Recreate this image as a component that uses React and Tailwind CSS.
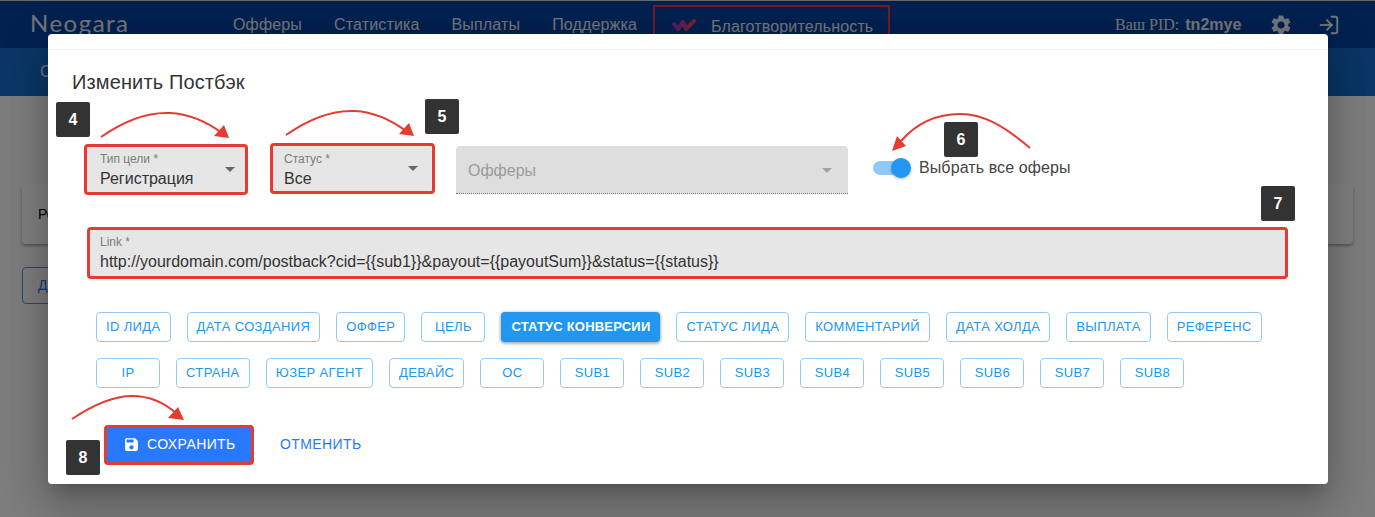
import React from "react";
import { LogIn } from "lucide-react";

const rowOne = [
  "ID лида",
  "Дата создания",
  "Оффер",
  "Цель",
  "Статус конверсии",
  "Статус лида",
  "Комментарий",
  "Дата холда",
  "Выплата",
  "Референс",
];
const rowTwo = ["IP", "Страна", "Юзер агент", "Девайс", "ОС", "SUB1", "SUB2", "SUB3", "SUB4", "SUB5", "SUB6", "SUB7", "SUB8"];

const navItems = ["Офферы", "Статистика", "Выплаты", "Поддержка"];

function Caret({ className }) {
  return <span className={`absolute h-0 w-0 border-x-[5px] border-t-[5px] border-x-transparent ${className}`} />;
}

function Chip({ label }) {
  const active = label === "Статус конверсии";
  return (
    <button
      className={`flex h-[30px] min-w-16 items-center justify-center rounded-[4px] text-[13px] uppercase ${
        active
          ? "bg-[#2196f3] px-[10px] font-bold tracking-[0.2px] text-white shadow-[0_1px_3px_1px_rgba(0,0,0,0.3)]"
          : "border border-[#90caf9] px-[9px] font-normal tracking-[0.37px] text-[#2196f3]"
      }`}
    >
      {label}
    </button>
  );
}

function SelectField({ label, value, className, caret }) {
  return (
    <div className={`relative rounded-[4px] border-[3px] border-[#e53b30] bg-[#e6e6e6] ${className}`}>
      <div className="mt-[5px] text-[12px] leading-[14px] text-[#7d7d7d]">{label}</div>
      <div className="mt-[3px] text-[16px] leading-[20px] text-[#333]">{value}</div>
      <Caret className={`top-[20px] border-t-[#666] ${caret}`} />
    </div>
  );
}

function Badge({ n, className }) {
  return (
    <div className={`absolute flex h-[35px] w-[34px] items-center justify-center rounded-[2px] bg-[#333] text-[16px] font-bold text-white ${className}`}>
      {n}
    </div>
  );
}

function Arrows() {
  return (
    <svg className="absolute left-0 top-0" width="1375" height="517" fill="none">
      <g stroke="#e53b30" strokeWidth="2">
        <path d="M101 137C128 118 150 112 170 113C190 114 207 122 222 133" />
        <path d="M286 135C313 116 335 110 355 111C375 112 391 120 406 131" />
        <path d="M1030 148C1005 127 985 114 960 114C935 114 915 125 901 141" />
        <path d="M72 419C96 403 115 396 132 396C150 396 165 403 177 414" />
      </g>
      <g fill="#e53b30">
        <path d="M229 138L214 136L224 125Z" />
        <path d="M414 136L399 134L409 123Z" />
        <path d="M892 151L897 136L906 146Z" />
        <path d="M184 420L168 418L178 407Z" />
      </g>
    </svg>
  );
}

export default function App() {
  return (
    <div className="relative h-[517px] w-[1375px] overflow-hidden bg-[#fafafa] font-['Liberation_Sans',sans-serif]">
      {/* page under the dialog */}
      <header className="flex h-12 items-center border-t border-[#ccc] bg-[#0642a0] text-[16px] tracking-[0.15px] text-white/90">
        <div className="ml-[30px] w-[203px] pb-[4px] text-[24px] font-normal leading-none tracking-[1.5px] text-white/90 font-['Lato',sans-serif]">Neogara</div>
        <nav className="flex items-center gap-8">
          {navItems.map((item) => (
            <a key={item}>{item}</a>
          ))}
        </nav>
        <div className="ml-4 flex h-[43px] w-[237px] items-start self-end rounded-t-[2px] border-2 border-b-0 border-[#e53950] pl-4 pt-[8px]">
          <svg className="mt-[3px]" width="26" height="14" viewBox="0 0 26 14" fill="none">
            <defs>
              <linearGradient id="charity" x1="0" x2="1" y1="0" y2="0">
                <stop offset="0" stopColor="#a13cc4" />
                <stop offset="1" stopColor="#ea4668" />
              </linearGradient>
            </defs>
            <path d="M3 6L7 11L12 4L15 11L23 3" stroke="url(#charity)" strokeWidth="4" strokeLinecap="round" strokeLinejoin="round" />
          </svg>
          <span className="ml-[14px]">Благотворительность</span>
        </div>
        <div className="ml-[225px] flex items-center whitespace-nowrap tracking-normal">
          <span className="font-['Liberation_Serif',serif]">Ваш PID:</span>
          <b className="ml-[6px]">tn2mye</b>
        </div>
        <svg className="ml-[28px]" width="24" height="24" viewBox="0 0 24 24" fill="currentColor">
          <path d="M19.14 12.94c.04-.3.06-.61.06-.94 0-.32-.02-.64-.07-.94l2.03-1.58c.18-.14.23-.41.12-.61l-1.92-3.32c-.12-.22-.37-.29-.59-.22l-2.39.96c-.5-.38-1.03-.7-1.62-.94l-.36-2.54c-.04-.24-.24-.41-.48-.41h-3.84c-.24 0-.43.17-.47.41l-.36 2.54c-.59.24-1.13.57-1.62.94l-2.39-.96c-.22-.08-.47 0-.59.22L2.74 8.87c-.12.21-.08.47.12.61l2.03 1.58c-.05.3-.09.63-.09.94s.02.64.07.94l-2.03 1.58c-.18.14-.23.41-.12.61l1.92 3.32c.12.22.37.29.59.22l2.39-.96c.5.38 1.03.7 1.62.94l.36 2.54c.05.24.24.41.48.41h3.84c.24 0 .44-.17.47-.41l.36-2.54c.59-.24 1.13-.56 1.62-.94l2.39.96c.22.08.47 0 .59-.22l1.92-3.32c.12-.22.07-.47-.12-.61l-2.01-1.58zM12 15.6c-1.98 0-3.6-1.62-3.6-3.6s1.62-3.6 3.6-3.6 3.6 1.62 3.6 3.6-1.62 3.6-3.6 3.6z" />
        </svg>
        <LogIn className="ml-[25px]" size={22} strokeWidth={2} strokeLinecap="square" strokeLinejoin="miter" />
      </header>
      <div className="flex h-12 items-center bg-gradient-to-r from-[#166ccc] to-[#146ac8] pl-10 text-[16px] text-white/90">С</div>
      <div className="mx-[22px] mt-[88px] flex h-[60px] items-center rounded-[4px] bg-white pl-4 text-[14px] text-black shadow-[0_2px_3px_rgba(0,0,0,0.3)]">Ре</div>
      <button className="ml-[22px] mt-[23px] h-[37px] w-[120px] rounded-[4px] border border-[#5c8fd6] pl-[15px] text-left text-[14px] text-[#2979ff]">Д</button>

      <div className="absolute inset-0 bg-black/50" />

      {/* dialog */}
      <div className="absolute left-12 top-[34px] h-[450px] w-[1280px] rounded-[4px] bg-white shadow-[0_11px_15px_-7px_rgba(0,0,0,0.2),0_24px_38px_3px_rgba(0,0,0,0.14),0_9px_46px_8px_rgba(0,0,0,0.12)]">
        <div className="h-4 border-b border-[#f2f2f2]" />
        <h2 className="ml-6 mt-4 text-[20px] font-normal leading-8 tracking-[0.13px] text-[#333]">Изменить Постбэк</h2>
        <div className="mt-[45px] flex items-start pl-9">
          <SelectField label="Тип цели *" value="Регистрация" caret="right-[10px]" className="mt-px h-[51px] w-[164px] pl-[13px]" />
          <SelectField label="Статус *" value="Все" caret="right-[14px]" className="ml-[22px] h-[51px] w-[165px] pl-[11px] pt-px" />
          <div className="relative ml-[21px] mt-[3px] flex h-12 w-[392px] items-center rounded-t-[4px] border-b border-dotted border-[#777] bg-[#dedede] pl-3 pt-[2px] text-[16px] text-[#9b9b9b]">
            Офферы
            <Caret className="right-[16px] top-[22px] border-t-[#a3a3a3]" />
          </div>
          <div className="relative ml-[25px] mt-[15px] h-5 w-[38px]">
            <div className="absolute left-0 top-[3px] h-[14px] w-[34px] rounded-full bg-[#90caf9]" />
            <div className="absolute right-0 top-0 h-5 w-5 rounded-full bg-[#2196f3] shadow-[0_1px_3px_rgba(0,0,0,0.3)]" />
          </div>
          <span className="ml-2 mt-[15px] text-[16px] leading-[20px] tracking-[0.1px] text-[#444]">Выбрать все оферы</span>
        </div>
        <div className="ml-[39px] mt-8 h-[52px] w-[1201px] rounded-[4px] border-[3px] border-[#e53b30] bg-[#e6e6e6] pl-[10px]">
          <div className="mt-[5px] text-[12px] leading-[14px] text-[#7d7d7d]">Link *</div>
          <div className="mt-[3px] text-[16px] leading-[20px] text-[#333]">http://yourdomain.com/postback?cid={"{{sub1}}"}&amp;payout={"{{payoutSum}}"}&amp;status={"{{status}}"}</div>
        </div>
        <div className="ml-12 mt-[33px] flex gap-4">
          {rowOne.map((c) => (
            <Chip key={c} label={c} />
          ))}
        </div>
        <div className="ml-12 mt-4 flex gap-4">
          {rowTwo.map((c) => (
            <Chip key={c} label={c} />
          ))}
        </div>
        <div className="ml-14 mt-[37px] flex items-center">
          <button className="flex h-10 w-[150px] items-center rounded-[4px] border-[3px] border-[#e53b30] bg-[#2979ff] pb-[2px] pl-[16px] text-[14px] font-normal tracking-[0.4px] text-white">
            <svg width="17" height="17" viewBox="0 0 24 24" fill="currentColor">
              <path d="M17 3H5c-1.11 0-2 .9-2 2v14c0 1.1.89 2 2 2h14c1.1 0 2-.9 2-2V7l-4-4zm-5 16c-1.66 0-3-1.34-3-3s1.34-3 3-3 3 1.34 3 3-1.34 3-3 3zm3-10H5V5h10v4z" />
            </svg>
            <span className="ml-[7px]">СОХРАНИТЬ</span>
          </button>
          <button className="ml-[26px] pb-[2px] text-[14px] tracking-[0.4px] text-[#2979ff]">ОТМЕНИТЬ</button>
        </div>
      </div>

      {/* annotations */}
      <Arrows />
      <Badge n="4" className="left-[56px] top-[102px]" />
      <Badge n="5" className="left-[425px] top-[99px]" />
      <Badge n="6" className="left-[944px] top-[122px]" />
      <Badge n="7" className="left-[1261px] top-[186px]" />
      <Badge n="8" className="left-[66px] top-[440px]" />
    </div>
  );
}
